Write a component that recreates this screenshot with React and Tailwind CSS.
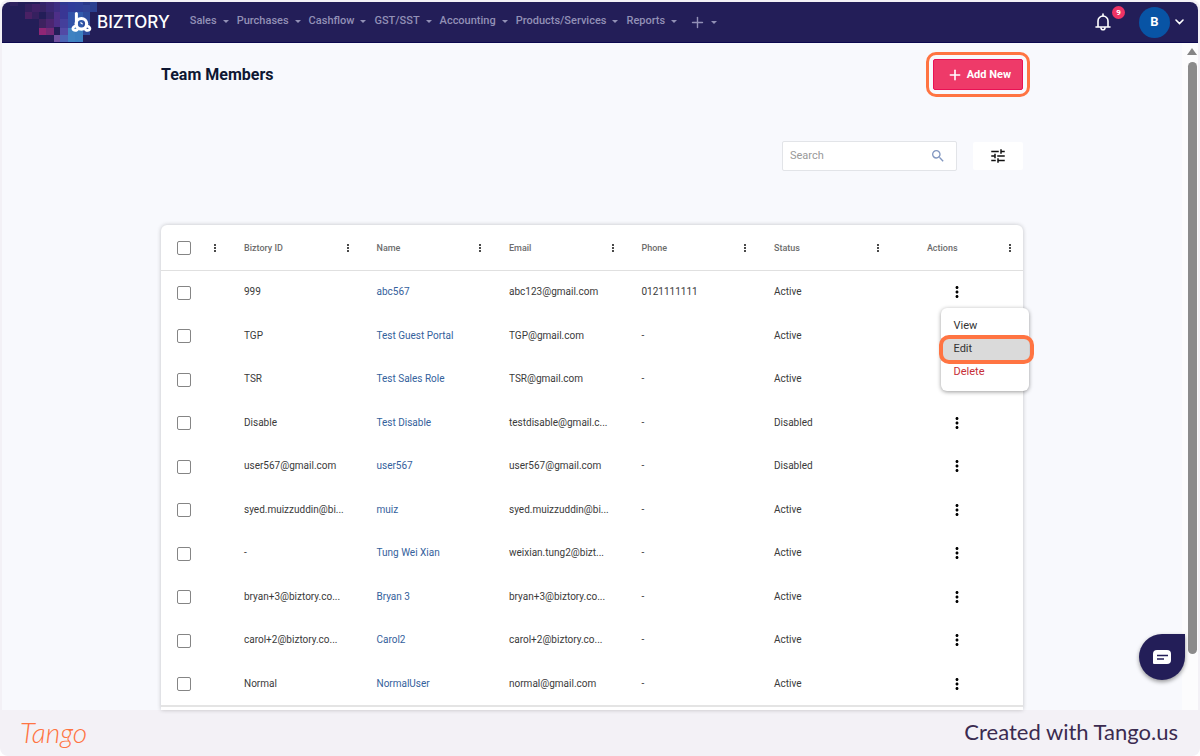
import React, { useState } from "react";
import { Plus } from "lucide-react";
import { MdMoreVert, MdSearch, MdTune } from "react-icons/md";

const menuItems = [
  "Sales",
  "Purchases",
  "Cashflow",
  "GST/SST",
  "Accounting",
  "Products/Services",
  "Reports",
];

const columns = ["Biztory ID", "Name", "Email", "Phone", "Status"];

const members = [
  { id: "999", name: "abc567", email: "abc123@gmail.com", phone: "0121111111", status: "Active" },
  { id: "TGP", name: "Test Guest Portal", email: "TGP@gmail.com", phone: "-", status: "Active" },
  { id: "TSR", name: "Test Sales Role", email: "TSR@gmail.com", phone: "-", status: "Active" },
  { id: "Disable", name: "Test Disable", email: "testdisable@gmail.c...", phone: "-", status: "Disabled" },
  { id: "user567@gmail.com", name: "user567", email: "user567@gmail.com", phone: "-", status: "Disabled" },
  { id: "syed.muizzuddin@bi...", name: "muiz", email: "syed.muizzuddin@bi...", phone: "-", status: "Active" },
  { id: "-", name: "Tung Wei Xian", email: "weixian.tung2@bizt...", phone: "-", status: "Active" },
  { id: "bryan+3@biztory.co...", name: "Bryan 3", email: "bryan+3@biztory.co...", phone: "-", status: "Active" },
  { id: "carol+2@biztory.co...", name: "Carol2", email: "carol+2@biztory.co...", phone: "-", status: "Active" },
  { id: "Normal", name: "NormalUser", email: "normal@gmail.com", phone: "-", status: "Active" },
];

// x, y, width, height, colour
const pixels = [
  [10, 0, 8, 6, "#2f225e"],
  [25, 4, 7, 8, "#33205e"],
  [25, 12, 7, 7, "#4a2164"],
  [32, 4, 8, 8, "#402166"],
  [32, 12, 7, 7, "#36205f"],
  [40, 0, 6, 5, "#33246a"],
  [40, 5, 6, 7, "#362464"],
  [46, 0, 8, 12, "#3b2874"],
  [39, 19, 7, 9, "#3d225f"],
  [46, 12, 8, 7, "#362668"],
  [46, 19, 8, 9, "#4c2570"],
  [39, 28, 7, 7, "#8f2675"],
  [46, 28, 8, 7, "#732a76"],
  [54, 0, 6, 12, "#3e2e82"],
  [54, 12, 6, 15, "#4d2f88"],
  [54, 35, 6, 8, "#70509f"],
  [60, 0, 8, 5, "#303a92"],
  [60, 5, 8, 14, "#393694"],
  [60, 19, 8, 9, "#443f9b"],
  [60, 28, 8, 7, "#524aa5"],
  [60, 35, 8, 8, "#4b63b4"],
  [68, 0, 7, 12, "#303c9a"],
  [68, 12, 7, 16, "#3153a8"],
  [68, 28, 7, 15, "#3f82c1"],
  [75, 0, 8, 12, "#2f3f98"],
  [75, 12, 8, 16, "#315bad"],
  [75, 28, 8, 15, "#3c7fc0"],
  [83, 0, 7, 5, "#293889"],
  [83, 5, 7, 7, "#314396"],
  [83, 12, 7, 23, "#2e4b9c"],
  [90, 0, 7, 12, "#2b4090"],
];

const Caret = () => (
  <span className="border-x-3 border-t-3 border-x-transparent border-t-current" />
);

const Logo = () => (
  <a href="#home" className="relative flex h-full items-center pl-[69px]">
    <svg className="absolute left-0 top-0 h-full w-[97px]" viewBox="2 2 97 40" preserveAspectRatio="none" aria-hidden="true">
      {pixels.map(([x, y, w, h, fill]) => (
        <rect key={`${x}-${y}`} x={x} y={y} width={w} height={h} fill={fill} />
      ))}
    </svg>
    <svg className="relative h-5 w-[21px]" viewBox="0 0 21 20" fill="none" stroke="#fff" aria-hidden="true">
      <path d="M5.4 1.5V12" strokeWidth="3" strokeLinecap="round" />
      <circle cx="10.4" cy="11.8" r="5.3" strokeWidth="3.2" />
      <path d="M3.8 14.4C2 15 1.4 16.8 2.6 17.8c1.1.8 2.4.6 3.6-.1M17 14.4c1.8.6 2.4 2.4 1.2 3.4-1.1.8-2.4.6-3.6-.1" strokeWidth="2.8" strokeLinecap="round" />
      <path d="M9.8 10.8l1.4 1" strokeWidth="1.2" strokeLinecap="round" />
    </svg>
    <span className="relative ml-[5px] font-[Inter] text-[17px] font-medium leading-5 text-white">
      BIZTORY
    </span>
  </a>
);

const Header = () => (
  <header className="flex h-[41px] items-center rounded-t-lg border-b border-[#0d0950] bg-[#231e58]">
    <Logo />
    <nav className="ml-5 flex items-center gap-2 pb-px text-[11px] font-medium text-[#9290b6]">
      {menuItems.map((item) => (
        <button key={item} className="flex items-center gap-[6px]">
          {item}
          <Caret />
        </button>
      ))}
      <button aria-label="Create" className="ml-1 mt-[2px] flex items-center gap-[5px]">
        <Plus size={17} strokeWidth={2} />
        <Caret />
      </button>
    </nav>
    <div className="ml-auto flex items-center pr-[14px]">
      <button aria-label="Notifications" className="relative mr-7">
        <svg width="16" height="18" viewBox="0 0 16 18" fill="none" stroke="#fff" strokeWidth="1.6" aria-hidden="true">
          <path d="M1 14h14M3 13.6V8a5 5 0 0 1 10 0v5.6" strokeLinecap="round" />
          <path d="M8 1v2M6 14.8a2 2 0 0 0 4 0" strokeLinecap="round" />
        </svg>
        <span className="absolute -right-[14px] -top-[7px] flex size-[13px] items-center justify-center rounded-full bg-[#ee3365] text-[8px] font-bold text-white">
          9
        </span>
      </button>
      <button aria-label="Account" className="flex items-center gap-[5px] text-white">
        <span className="flex size-[31px] items-center justify-center rounded-full bg-[#0854a5] text-[13px] font-bold">
          B
        </span>
        <svg width="9" height="6" viewBox="0 0 9 6" fill="none" stroke="currentColor" strokeWidth="1.6" aria-hidden="true">
          <path d="M1 1l3.5 3.5L8 1" strokeLinecap="round" />
        </svg>
      </button>
    </div>
  </header>
);

const Checkbox = ({ label }) => (
  <input
    type="checkbox"
    aria-label={label}
    className="block size-[14px] appearance-none rounded-xs border border-[#858585] bg-white checked:bg-[#231e58]"
  />
);

const ColumnMenu = ({ label }) => (
  <button aria-label={`${label} column menu`} className="flex w-4 justify-center text-[#222]">
    <MdMoreVert size={12} />
  </button>
);

const ActionMenu = () => (
  <div className="absolute left-[50px] top-[37px] z-10 w-[88px] rounded-md bg-white py-[7px] text-[11px] shadow-[0_1px_4px_rgba(0,0,0,0.4)]">
    <button className="block h-[23px] w-full pl-[13px] text-left text-[#333]">View</button>
    <button className="relative block h-[23px] w-full bg-[#dadada] pl-[13px] text-left text-[#333]">
      Edit
      <span className="absolute -inset-y-[3px] -left-[2px] -right-[5px] rounded-[10px] border-4 border-[#ff7442]" />
    </button>
    <button className="block h-[23px] w-full pl-[13px] text-left text-[#c62f38]">Delete</button>
  </div>
);

const MembersTable = ({ openRow, onToggle }) => (
  <table className="w-full table-fixed border-collapse text-left">
    <thead>
      <tr className="h-[45px] border-b border-[#e0e0e0] text-[9px] font-medium text-[#6d6d6d]">
        <th className="w-[67px] p-0 pt-[2px]">
          <div className="flex items-center justify-between pl-4 pr-[5px]">
            <Checkbox label="Select all members" />
            <ColumnMenu label="Selection" />
          </div>
        </th>
        {columns.map((column) => (
          <th key={column} className="p-0 pt-[2px] font-medium">
            <div className="flex items-center justify-between pl-4 pr-[5px]">
              {column}
              <ColumnMenu label={column} />
            </div>
          </th>
        ))}
        <th className="p-0 pt-[2px] font-medium">
          <div className="flex items-center pl-4 pr-[5px]">
            <span className="flex-1 pr-6 text-center">Actions</span>
            <ColumnMenu label="Actions" />
          </div>
        </th>
      </tr>
    </thead>
    <tbody className="text-[10px] text-[#3a3a3a]">
      {members.map((member, index) => (
        <tr key={member.name} className="odd:h-11 even:h-[43px]">
          <td className="p-0 pl-4 pt-px">
            <Checkbox label={`Select ${member.name}`} />
          </td>
          <td className="truncate p-0 pb-px pl-4">{member.id}</td>
          <td className="truncate p-0 pb-px pl-4">
            <a href="#member" className="text-[#34619c]">{member.name}</a>
          </td>
          <td className="truncate p-0 pb-px pl-4">{member.email}</td>
          <td className="truncate p-0 pb-px pl-4">{member.phone}</td>
          <td className="truncate p-0 pb-px pl-4">{member.status}</td>
          <td className="relative p-0">
            {/* the open menu covers the buttons of the two rows below */}
            {(openRow === null || index <= openRow || index > openRow + 2) && (
              <button
                aria-label={`Actions for ${member.name}`}
                onClick={() => onToggle(index)}
                className="mx-auto block text-black"
              >
                <MdMoreVert size={18} />
              </button>
            )}
            {openRow === index && <ActionMenu />}
          </td>
        </tr>
      ))}
    </tbody>
  </table>
);

const Scrollbar = () => (
  <div className="flex w-4 shrink-0 flex-col items-center bg-[#fcfcfd] pb-14 pl-1 pt-[5px]">
    <span className="border-x-[5px] border-b-[7px] border-x-transparent border-b-[#858585]" />
    <span className="mt-[7px] w-[9px] flex-1 rounded-full bg-[#8b8b8b]" />
  </div>
);

const App = () => {
  const [search, setSearch] = useState("");
  const [openRow, setOpenRow] = useState(0);

  const toggleRow = (index) => setOpenRow(openRow === index ? null : index);

  return (
    <div className="bg-white font-[Roboto,sans-serif]">
      <div className="flex min-h-screen flex-col rounded-lg bg-[#f3f1f6]">
        <div className="flex flex-1 flex-col px-[2px] pt-[2px]">
          <Header />
          <div className="flex flex-1 bg-[#f8f9fd]">
            <main className="relative flex min-w-0 flex-1 flex-col px-4">
              <div className="mx-auto flex w-full max-w-[862px] flex-1 flex-col">
                {/* Title */}
                <div className="flex items-center justify-between pt-4">
                  <h1 className="text-base font-bold text-[#0e1733]">Team Members</h1>
                  <button className="relative flex h-[31px] items-center gap-1 rounded-xs border border-[#ea1155] bg-[#ee3a69] pl-[13px] pr-[11px] text-[11px] font-bold text-white">
                    <Plus size={16} strokeWidth={2.4} />
                    <span className="pt-px">Add New</span>
                    <span className="absolute -inset-2 rounded-[10px] border-3 border-[#ff7442]" />
                  </button>
                </div>

                {/* Search */}
                <div className="mt-[51px] flex items-center justify-end gap-4">
                  <label className="flex h-[30px] w-[175px] items-center rounded-xs border border-[#e2e4e8] bg-white pl-[7px] pr-[10px]">
                    <input
                      type="text"
                      aria-label="Search"
                      placeholder="Search"
                      value={search}
                      onChange={(e) => setSearch(e.target.value)}
                      className="min-w-0 flex-1 text-[11px] outline-none placeholder:text-[#999]"
                    />
                    <MdSearch size={16} className="text-[#8297c0]" />
                  </label>
                  <button aria-label="Filters" className="flex h-7 w-[50px] items-center justify-center rounded-xs bg-white text-[#111]">
                    <MdTune size={18} />
                  </button>
                </div>

                {/* Table */}
                <div className="mt-[54px] flex-1 rounded-t-md bg-white shadow-[0_0_4px_rgba(0,0,0,0.22)]">
                  <MembersTable openRow={openRow} onToggle={toggleRow} />
                  <div className="h-[3px] border-t-2 border-[#e4e4e4]" />
                </div>
              </div>

              {/* Chat */}
              <button
                aria-label="Open chat"
                className="absolute -right-[3px] bottom-[30px] flex size-[46px] items-center justify-center rounded-full rounded-tr-md bg-[#231e58] shadow-[0_2px_4px_rgba(0,0,0,0.4)]"
              >
                <svg width="18" height="14" viewBox="0 0 18 14" aria-hidden="true">
                  <path d="M4 0h10a4 4 0 0 1 4 4v6a4 4 0 0 1-4 4H1a1 1 0 0 1-1-1V4a4 4 0 0 1 4-4z" fill="#fff" />
                  <path d="M4 5.5h11M4 9h7" stroke="#231e58" strokeWidth="1.4" />
                </svg>
              </button>
            </main>
            <Scrollbar />
          </div>
        </div>
        <footer className="flex h-[46px] items-center justify-between pb-[2px] pl-5 pr-[22px]">
          <a href="#tango" className="font-[Lato] text-[28px] font-light italic leading-8 text-[#ff7442]">
            Tango
          </a>
          <span className="font-[Lato] text-[22px] leading-7 text-[#3b2b50]">
            Created with Tango.us
          </span>
        </footer>
      </div>
    </div>
  );
};

export default App;
